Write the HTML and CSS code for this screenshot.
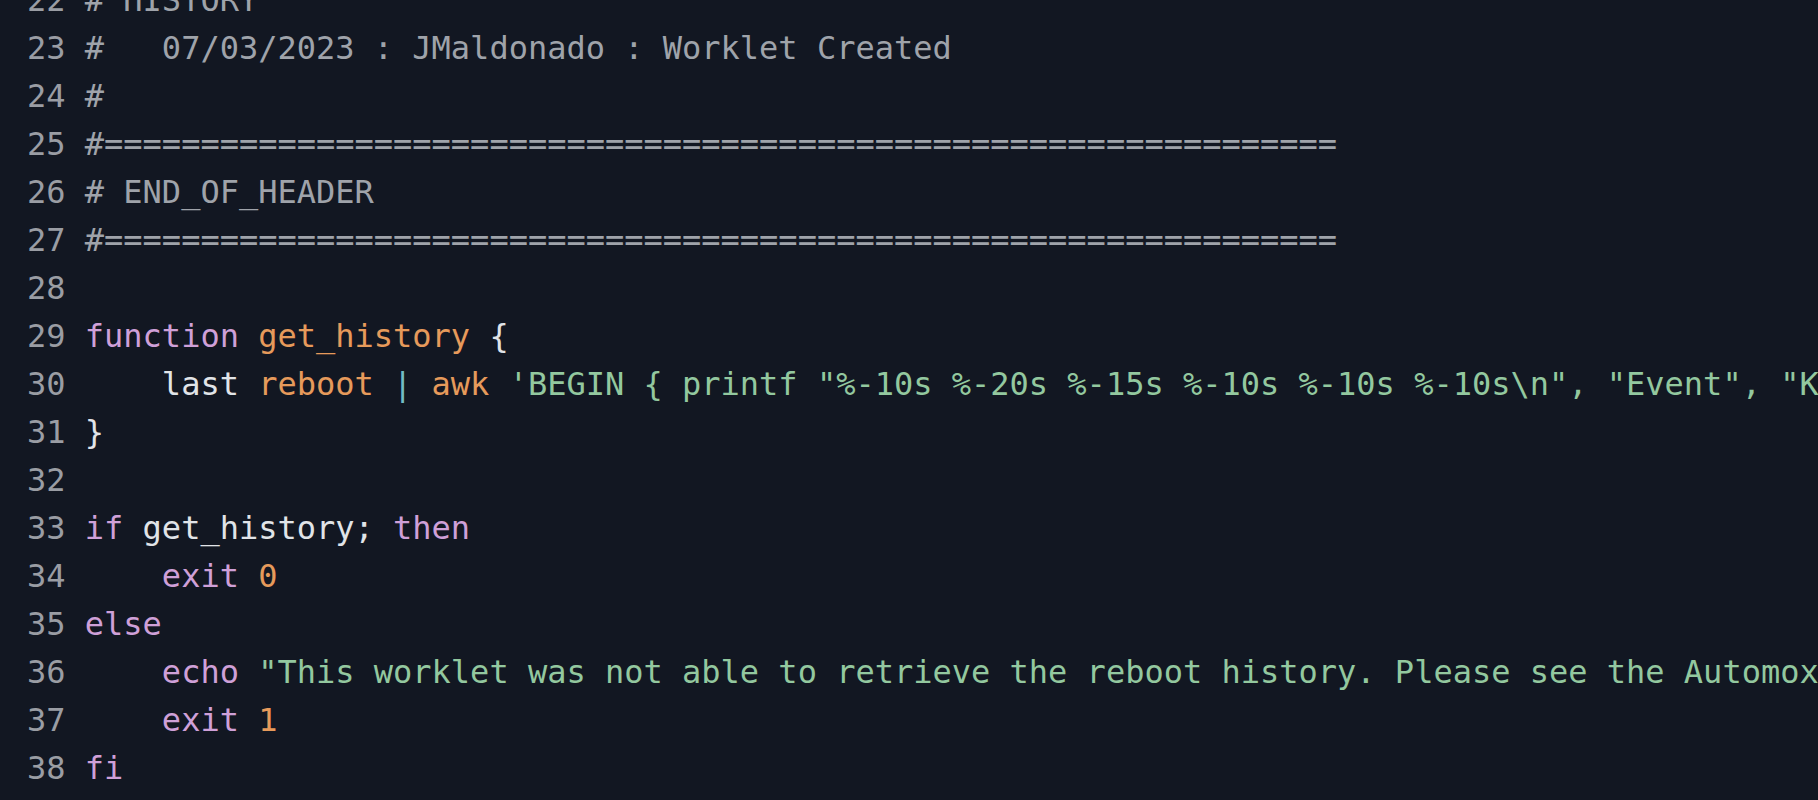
FILE: index.html
```html
<!DOCTYPE html>
<html>
<head>
<meta charset="utf-8">
<link rel="stylesheet" href="styles.css">
</head>
<body>
<div class="editor">
<div class="line"><span class="ln">22</span><span class="cm"># HISTORY</span></div>
<div class="line"><span class="ln">23</span><span class="cm">#   07/03/2023 : JMaldonado : Worklet Created</span></div>
<div class="line"><span class="ln">24</span><span class="cm">#</span></div>
<div class="line"><span class="ln">25</span><span class="cm">#================================================================</span></div>
<div class="line"><span class="ln">26</span><span class="cm"># END_OF_HEADER</span></div>
<div class="line"><span class="ln">27</span><span class="cm">#================================================================</span></div>
<div class="line"><span class="ln">28</span><span></span></div>
<div class="line"><span class="ln">29</span><span><span class="kw">function</span> <span class="fn">get_history</span> <span class="pl">{</span></span></div>
<div class="line"><span class="ln">30</span><span>    <span class="pl">last</span> <span class="fn">reboot</span> <span class="op">|</span> <span class="fn">awk</span> <span class="st">'BEGIN { printf "%-10s %-20s %-15s %-10s %-10s %-10s\n", "Event", "Kernel", "Date", "Time", "Duration"; }'</span></span></div>
<div class="line"><span class="ln">31</span><span class="pl">}</span></div>
<div class="line"><span class="ln">32</span><span></span></div>
<div class="line"><span class="ln">33</span><span><span class="kw">if</span> <span class="pl">get_history;</span> <span class="kw">then</span></span></div>
<div class="line"><span class="ln">34</span><span>    <span class="kw">exit</span> <span class="fn">0</span></span></div>
<div class="line"><span class="ln">35</span><span class="kw">else</span></div>
<div class="line"><span class="ln">36</span><span>    <span class="kw">echo</span> <span class="st">"This worklet was not able to retrieve the reboot history. Please see the Automox console for details."</span></span></div>
<div class="line"><span class="ln">37</span><span>    <span class="kw">exit</span> <span class="fn">1</span></span></div>
<div class="line"><span class="ln">38</span><span class="kw">fi</span></div>
</div>
</body>
</html>
```

FILE: styles.css
```css
html, body {
  margin: 0;
  padding: 0;
  background: #121722;
  overflow: hidden;
  height: 800px;
}

.editor {
  margin-top: -24px;
  padding-left: 27px;
  font-family: "DejaVu Sans Mono", "Liberation Mono", monospace;
  font-size: 32px;
  line-height: 48px;
  color: #e1e4e8;
}

.line {
  display: flex;
  height: 48px;
  white-space: pre;
}

.ln {
  width: 2ch;
  margin-right: 1ch;
  color: #9a9da4;
  text-align: right;
  flex: none;
}

.cm { color: #9fa3aa; }
.kw { color: #cfa0d8; }
.fn { color: #e69a5b; }
.st { color: #93c89f; }
.op { color: #73bcc6; }
.pl { color: #e1e4e8; }
```
